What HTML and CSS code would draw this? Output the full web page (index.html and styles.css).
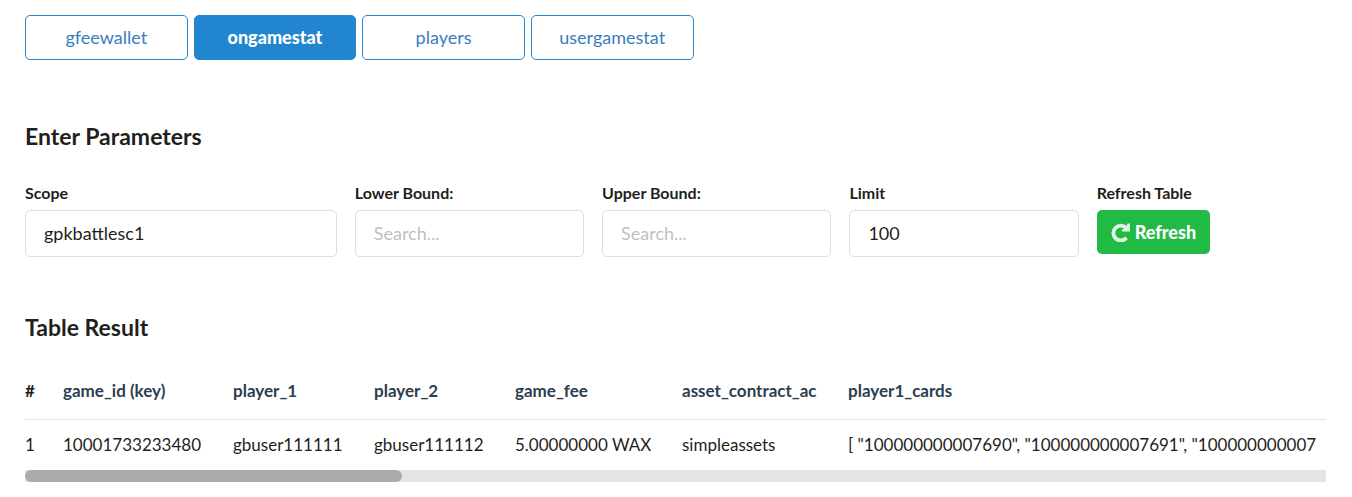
FILE: index.html
```html
<!DOCTYPE html>
<html lang="en">
<head>
<meta charset="utf-8">
<meta name="viewport" content="width=device-width, initial-scale=1">
<title>Table Result</title>
<link rel="stylesheet" href="styles.css">
</head>
<body>
<main class="page">
  <nav class="tabs">
    <button type="button" class="tab">gfeewallet</button>
    <button type="button" class="tab tab-active">ongamestat</button>
    <button type="button" class="tab">players</button>
    <button type="button" class="tab">usergamestat</button>
  </nav>

  <h2 class="heading">Enter Parameters</h2>
  <form class="fields">
    <div class="field field-wide">
      <label class="label" for="scope">Scope</label>
      <input class="input" id="scope" type="text" value="gpkbattlesc1">
    </div>
    <div class="field">
      <label class="label" for="lower">Lower Bound:</label>
      <input class="input" id="lower" type="text" placeholder="Search...">
    </div>
    <div class="field">
      <label class="label" for="upper">Upper Bound:</label>
      <input class="input" id="upper" type="text" placeholder="Search...">
    </div>
    <div class="field">
      <label class="label" for="limit">Limit</label>
      <input class="input" id="limit" type="text" value="100">
    </div>
    <div class="field">
      <label class="label" for="refresh">Refresh Table</label>
      <button class="refresh" id="refresh" type="button">
        <svg class="icon" viewBox="0 0 18 18" aria-hidden="true">
          <path d="M14.4 4.8A7 7 0 1 0 14.6 14" fill="none" stroke="currentColor" stroke-width="3.6"/>
          <path d="M18 .4v7.7h-7.7V6.2l2.3-.7L16 .4z" fill="currentColor"/>
        </svg>
        Refresh
      </button>
    </div>
  </form>

  <h2 class="heading">Table Result</h2>
  <div class="table-scroll">
    <table class="table">
      <colgroup>
        <col class="col-index"><col class="col-id"><col class="col-player"><col class="col-player"><col class="col-fee"><col class="col-contract"><col>
      </colgroup>
      <thead>
        <tr>
          <th class="index">#</th><th>game_id (key)</th><th>player_1</th><th>player_2</th><th>game_fee</th><th>asset_contract_ac</th><th>player1_cards</th>
        </tr>
      </thead>
      <tbody>
        <tr>
          <td>1</td><td>10001733233480</td><td>gbuser111111</td><td>gbuser111112</td><td>5.00000000 WAX</td><td>simpleassets</td><td>[ "100000000007690", "100000000007691", "100000000007</td>
        </tr>
      </tbody>
    </table>
  </div>
  <div class="scrollbar"><div class="scrollbar-thumb"></div></div>
</main>
</body>
</html>
```
FILE: styles.css
```css
* { box-sizing: border-box; }

body {
  margin: 0;
  background: #fff;
  color: #1f1f20;
  font-family: Lato, "Liberation Sans", sans-serif;
  font-size: 18px;
  line-height: 26px;
}

button, input { font: inherit; }

.page { padding: 15px 26px 14px 25px; }

.tabs { display: flex; gap: 6px; }

.tab {
  width: 12.5%;
  height: 45px;
  padding: 0 0 2px;
  border: 1px solid #2185d0;
  border-radius: 5px;
  background: #fff;
  color: #3a7cc0;
}

.tab-active {
  background: #2185d0;
  color: #fff;
  font-weight: 900;
}

.heading {
  margin: 61px 0 0;
  font-size: 23px;
  font-weight: 700;
  line-height: 30px;
}

.fields {
  display: flex;
  margin: 31px -9px 0;
}

.field {
  width: 18.75%;
  padding: 0 9px;
}

.field-wide { width: 25%; }

.label {
  display: block;
  margin-bottom: 6px;
  font-size: 16px;
  font-weight: 700;
  line-height: 22px;
}

.input {
  display: block;
  width: 100%;
  height: 47px;
  padding: 0 18px 2px;
  border: 1px solid #dededf;
  border-radius: 5px;
  background: #fff;
  color: #1f1f20;
}

.input::placeholder { color: #bfbfbf; opacity: 1; }

.refresh {
  display: flex;
  align-items: center;
  gap: 5px;
  height: 44px;
  padding: 0 14px;
  border: 0;
  border-radius: 5px;
  background: #21ba45;
  color: #fff;
  font-weight: 900;
}

.icon { width: 19px; height: 19px; opacity: .85; }

.fields + .heading { margin-top: 55px; }

.table-scroll { margin-top: 21px; overflow: hidden; }

.table {
  min-width: 100%;
  border-collapse: collapse;
  font-size: 17px;
  text-align: left;
  white-space: nowrap;
}

.col-index { width: 24px; }
.col-id { width: 170px; }
.col-player { width: 141px; }
.col-fee { width: 167px; }
.col-contract { width: 166px; }

.table th, .table td { padding: 0 0 0 14px; }
.table th:first-child, .table td:first-child { padding-left: 0; }

.table th {
  height: 56px;
  border-bottom: 1px solid #e4e4e5;
  color: #2c3e50;
  font-weight: 700;
}

.table .index { color: #1f1f20; }

.table td { height: 51px; }

.scrollbar { background: #e4e4e4; }

.scrollbar-thumb {
  width: 29%;
  height: 12px;
  border-radius: 6px;
  background: #ababab;
}
```
